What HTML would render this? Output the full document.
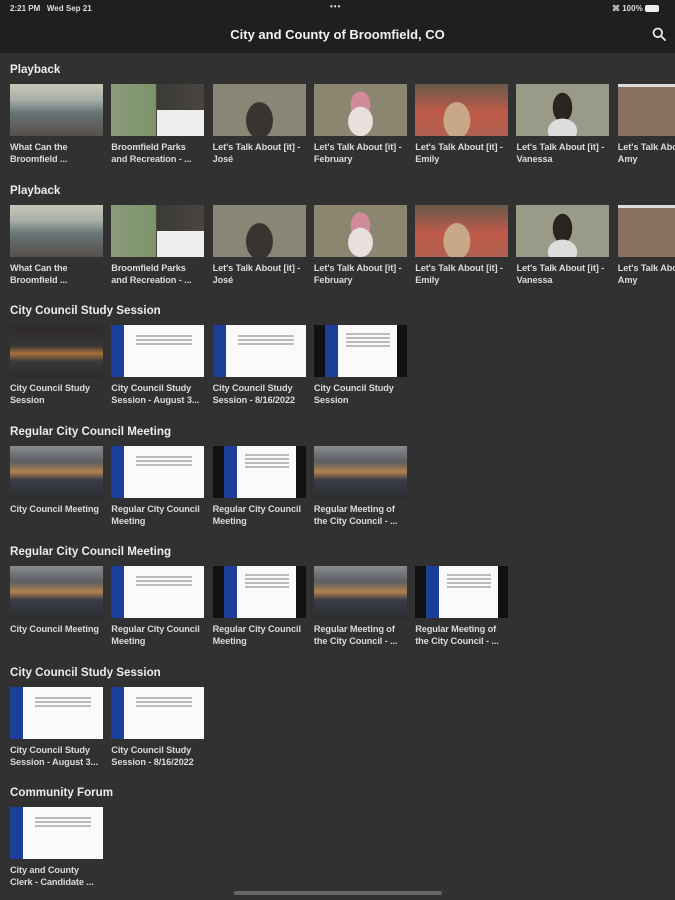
<!DOCTYPE html>
<html><head><meta charset="utf-8"><style>
*{margin:0;padding:0;box-sizing:border-box}
body{width:675px;height:900px;background:#313131;font-family:"Liberation Sans",sans-serif;overflow:hidden;position:relative;color:#e6e6e6}
.hdr{position:absolute;left:0;top:0;width:675px;height:53px;background:#1f1f1f}
.sb{position:absolute;top:4px;font-size:8px;font-weight:bold;color:#ddd}
.title{position:absolute;top:27px;left:0;width:675px;text-align:center;font-size:13px;font-weight:bold;color:#f2f2f2}
.sec{position:absolute;left:0;width:675px}
.sec h2{position:absolute;left:10px;top:0;font-size:11.6px;font-weight:bold;color:#ececec;white-space:nowrap}
.row{position:absolute;left:10px;top:21px;white-space:nowrap}
.it{display:inline-block;vertical-align:top;width:93px;margin-right:8.3px}
.th{width:93px;height:52px;position:relative;overflow:hidden}
.cap{margin-top:6px;font-size:9.2px;font-weight:bold;line-height:11.5px;color:#dadada;white-space:nowrap;overflow:hidden;letter-spacing:-0.1px}
.office{background:linear-gradient(180deg,#c9c6b8 0,#a8b0a8 30%,#6a7478 55%,#57504a 100%)}
.park{background:linear-gradient(90deg,#8a9a7a 0,#7d946a 48%,#3a3a36 49%,#4a4540 100%)}
.park:after{content:"";position:absolute;left:46px;top:26px;width:47px;height:26px;background:#eee}
.person{background:radial-gradient(ellipse 22px 30px at 50% 70%,#3a3430 60%,transparent 62%),#8a8676}
.p2{background:radial-gradient(ellipse 22px 26px at 50% 72%,#e8e0dc 55%,transparent 58%),radial-gradient(ellipse 16px 22px at 50% 40%,#d08a9a 60%,transparent 62%),#8a8670}
.p3{background:radial-gradient(ellipse 22px 30px at 45% 70%,#c8a888 60%,transparent 62%),linear-gradient(180deg,#6a5a4a 0,#c05a4a 55%,#b06050 100%)}
.p4{background:radial-gradient(ellipse 24px 20px at 50% 90%,#ddd 60%,transparent 62%),radial-gradient(ellipse 16px 24px at 50% 45%,#2a2420 60%,transparent 62%),#9a9a88}
.p5{background:radial-gradient(ellipse 20px 30px at 75% 75%,#2a2622 60%,transparent 62%),#8a7060;border-top:3px solid #ddd}
.council{background:linear-gradient(180deg,#2e2a28 0,#353535 40%,#a8703a 55%,#3a3a3c 70%,#2a2a2c 100%)}
.meet{background:linear-gradient(180deg,#8a8c90 0,#5a5e62 30%,#b08050 50%,#3a3e48 65%,#2a2c30 100%)}
.slide{background:#fafafa}
.slide:before{content:"";position:absolute;left:0;top:0;width:13px;height:52px;background:#1c3f9a}
.slide i{position:absolute;left:25px;top:10px;width:56px;height:2px;background:#bbb;box-shadow:0 4px 0 #bbb,0 8px 0 #bbb}
.blk{background:#fafafa}
.blk:before{content:"";position:absolute;left:0;top:0;width:24px;height:52px;background:linear-gradient(90deg,#111 0,#111 11px,#1c3f9a 11px)}
.blk:after{content:"";position:absolute;right:0;top:0;width:10px;height:52px;background:#111}
.blk i{position:absolute;left:32px;top:8px;width:44px;height:2px;background:#bbb;box-shadow:0 4px 0 #bbb,0 8px 0 #bbb,0 12px 0 #bbb}
.home{position:absolute;left:234px;top:891px;width:208px;height:4px;border-radius:2px;background:#666}
</style></head><body>
<div class="hdr">
<div class="sb" style="left:10px">2:21 PM&nbsp;&nbsp; Wed Sep 21</div>
<div class="sb" style="left:330px;top:2px;letter-spacing:1px">•••</div>
<div class="sb" style="left:612px">&#8984; 100% <span style="display:inline-block;width:14px;height:7px;background:#eee;border-radius:2px;vertical-align:-1px"></span></div>
<div class="title">City and County of Broomfield, CO</div>
<svg style="position:absolute;left:652px;top:27px" width="14" height="14" viewBox="0 0 14 14"><circle cx="5.8" cy="5.8" r="4.3" fill="none" stroke="#eee" stroke-width="1.7"/><path d="M9 9l4 4" stroke="#eee" stroke-width="1.8" stroke-linecap="round"/></svg>
</div>

<div class="sec" style="top:63px"><h2>Playback</h2><div class="row">
<div class="it"><div class="th office"></div><div class="cap">What Can the<br>Broomfield ...</div></div><div class="it"><div class="th park"></div><div class="cap">Broomfield Parks<br>and Recreation - ...</div></div><div class="it"><div class="th person"></div><div class="cap">Let's Talk About [it] -<br>José</div></div><div class="it"><div class="th p2"></div><div class="cap">Let's Talk About [it] -<br>February</div></div><div class="it"><div class="th p3"></div><div class="cap">Let's Talk About [it] -<br>Emily</div></div><div class="it"><div class="th p4"></div><div class="cap">Let's Talk About [it] -<br>Vanessa</div></div><div class="it"><div class="th p5"></div><div class="cap">Let's Talk About [it] -<br>Amy</div></div>
</div></div>

<div class="sec" style="top:184px"><h2>Playback</h2><div class="row">
<div class="it"><div class="th office"></div><div class="cap">What Can the<br>Broomfield ...</div></div><div class="it"><div class="th park"></div><div class="cap">Broomfield Parks<br>and Recreation - ...</div></div><div class="it"><div class="th person"></div><div class="cap">Let's Talk About [it] -<br>José</div></div><div class="it"><div class="th p2"></div><div class="cap">Let's Talk About [it] -<br>February</div></div><div class="it"><div class="th p3"></div><div class="cap">Let's Talk About [it] -<br>Emily</div></div><div class="it"><div class="th p4"></div><div class="cap">Let's Talk About [it] -<br>Vanessa</div></div><div class="it"><div class="th p5"></div><div class="cap">Let's Talk About [it] -<br>Amy</div></div>
</div></div>

<div class="sec" style="top:304px"><h2>City Council Study Session</h2><div class="row">
<div class="it"><div class="th council"></div><div class="cap">City Council Study<br>Session</div></div><div class="it"><div class="th slide"><i></i></div><div class="cap">City Council Study<br>Session - August 3...</div></div><div class="it"><div class="th slide"><i></i></div><div class="cap">City Council Study<br>Session - 8/16/2022</div></div><div class="it"><div class="th blk"><i></i></div><div class="cap">City Council Study<br>Session</div></div>
</div></div>

<div class="sec" style="top:425px"><h2>Regular City Council Meeting</h2><div class="row">
<div class="it"><div class="th meet"></div><div class="cap">City Council Meeting</div></div><div class="it"><div class="th slide"><i></i></div><div class="cap">Regular City Council<br>Meeting</div></div><div class="it"><div class="th blk"><i></i></div><div class="cap">Regular City Council<br>Meeting</div></div><div class="it"><div class="th meet"></div><div class="cap">Regular Meeting of<br>the City Council - ...</div></div>
</div></div>

<div class="sec" style="top:545px"><h2>Regular City Council Meeting</h2><div class="row">
<div class="it"><div class="th meet"></div><div class="cap">City Council Meeting</div></div><div class="it"><div class="th slide"><i></i></div><div class="cap">Regular City Council<br>Meeting</div></div><div class="it"><div class="th blk"><i></i></div><div class="cap">Regular City Council<br>Meeting</div></div><div class="it"><div class="th meet"></div><div class="cap">Regular Meeting of<br>the City Council - ...</div></div><div class="it"><div class="th blk"><i></i></div><div class="cap">Regular Meeting of<br>the City Council - ...</div></div>
</div></div>

<div class="sec" style="top:666px"><h2>City Council Study Session</h2><div class="row">
<div class="it"><div class="th slide"><i></i></div><div class="cap">City Council Study<br>Session - August 3...</div></div><div class="it"><div class="th slide"><i></i></div><div class="cap">City Council Study<br>Session - 8/16/2022</div></div>
</div></div>

<div class="sec" style="top:786px"><h2>Community Forum</h2><div class="row">
<div class="it"><div class="th slide"><i></i></div><div class="cap">City and County<br>Clerk - Candidate ...</div></div>
</div></div>

<div class="home"></div>
</body></html>
